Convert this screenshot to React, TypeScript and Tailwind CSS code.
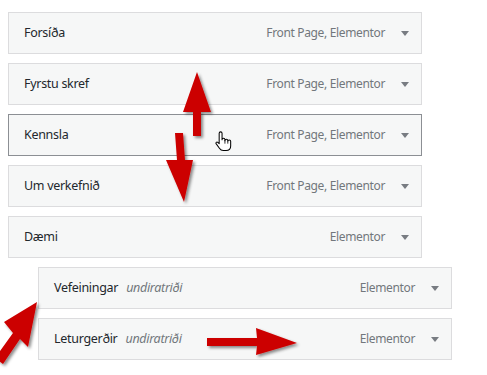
import React from "react";

type Item = { title: string; sub?: boolean; type: string; hover?: boolean };

const items: Item[] = [
  { title: "Forsíða", type: "Front Page, Elementor" },
  { title: "Fyrstu skref", type: "Front Page, Elementor" },
  { title: "Kennsla", type: "Front Page, Elementor", hover: true },
  { title: "Um verkefnið", type: "Front Page, Elementor" },
  { title: "Dæmi", type: "Elementor" },
  { title: "Vefeiningar", type: "Elementor", sub: true },
  { title: "Leturgerðir", type: "Elementor", sub: true },
];

function Row({ item }: { item: Item }) {
  return (
    <div className={item.sub ? "pl-[30px]" : ""}>
      <div
        className={
          "flex h-[42px] w-[414px] items-center justify-between border bg-[#f6f7f7] pl-[15px] pr-[12px] " +
          (item.hover ? "border-[#8c8f94]" : "border-[#dcdcde]")
        }
      >
        <div className="flex items-baseline gap-[8px]">
          <span className="text-[12.5px] tracking-[-0.3px] text-[#23282d]">{item.title}</span>
          {item.sub && (
            <span className="text-[12.5px] italic tracking-[-0.3px] text-[#72777c]">undiratriði</span>
          )}
        </div>
        <div className="flex items-center">
          <span className="text-[12px] tracking-[-0.35px] text-[#72777c]">{item.type}</span>
          <svg width="8" height="5" viewBox="0 0 8 5" className="ml-[16px]">
            <polygon points="0,0 8,0 4,5" fill="#787c82" />
          </svg>
        </div>
      </div>
    </div>
  );
}

export default function App() {
  return (
    <div
      className="relative h-[375px] w-[487px] overflow-hidden bg-white"
      style={{ fontFamily: '"Segoe UI", "Noto Sans", sans-serif' }}
    >
      <div className="flex flex-col gap-[9px] pl-[8px] pt-[12px]">
        {items.map((it) => (
          <Row key={it.title} item={it} />
        ))}
      </div>
      <svg
        className="pointer-events-none absolute left-0 top-0"
        width="487"
        height="375"
        viewBox="0 0 487 375"
      >
        <defs>
          <filter id="sh" x="-20%" y="-20%" width="140%" height="140%">
            <feDropShadow dx="2" dy="2" stdDeviation="1.5" floodColor="#000" floodOpacity="0.45" />
          </filter>
        </defs>
        <g fill="#cc0000" filter="url(#sh)">
          <polygon points="197,72 211,112 201,112 201,136 193,136 193,112 183,112" />
          <polygon points="175,133 183,133 185,160 193,160 184,202 166,160 177,160" />
          <polygon points="37,302 28,347 20,339 3,364 -5,358 13,333 4,322" />
          <polygon points="207,338 257,338 256,328 297,343 256,355 257,346 207,346" />
        </g>
        <g transform="translate(214,131) scale(1.15)">
          <path
            d="M4.5,2 a1.25,1.25 0 0 1 2.5,0 V7.5 a1.25,1.25 0 0 1 2.5,0 V8.5 a1.25,1.25 0 0 1 2.5,0 V9 a1.25,1.25 0 0 1 2.5,0 V13 c0,2.5 -1.5,4 -4,4 H8 c-1.5,0 -2.5,-0.8 -3.3,-2 L1.8,11 c-0.6,-0.9 0.6,-1.9 1.5,-1.1 L4.5,11 Z"
            fill="#fff"
            stroke="#000"
            strokeWidth="0.9"
            strokeLinejoin="round"
          />
          <path d="M9.5,8 V11 M12,9 V11" stroke="#000" strokeWidth="0.7" />
        </g>
      </svg>
    </div>
  );
}
